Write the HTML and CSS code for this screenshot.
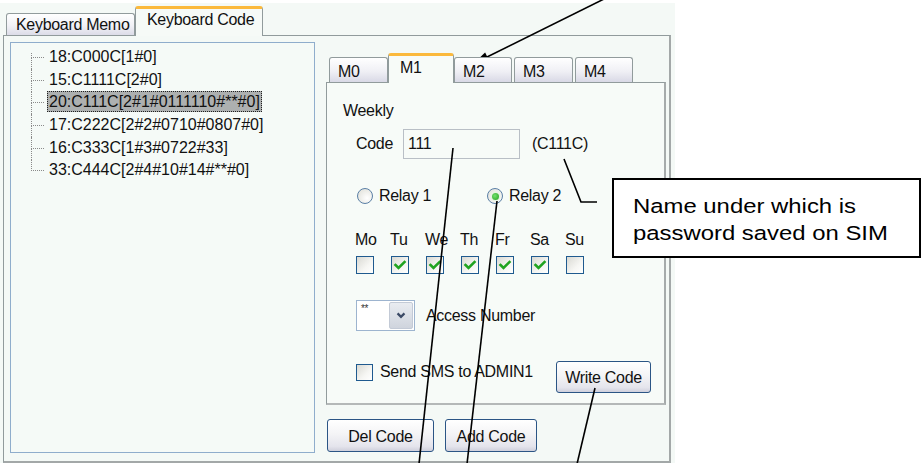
FILE: index.html
```html
<!DOCTYPE html>
<html>
<head>
<meta charset="utf-8">
<link rel="stylesheet" href="styles.css">
</head>
<body>
<div class="window">
  <div class="tabstrip">
    <div class="tab">Keyboard Memo</div>
    <div class="tab active">Keyboard Code</div>
  </div>
  <div class="panel">
    <div class="tree">
      <ul class="tree-list">
        <li><span class="node">18:C000C[1#0]</span></li>
        <li><span class="node">15:C1111C[2#0]</span></li>
        <li><span class="node selected">20:C111C[2#1#0111110#**#0]</span></li>
        <li><span class="node">17:C222C[2#2#0710#0807#0]</span></li>
        <li><span class="node">16:C333C[1#3#0722#33]</span></li>
        <li><span class="node">33:C444C[2#4#10#14#**#0]</span></li>
      </ul>
    </div>
    <div class="right">
      <div class="mtabs">
        <div class="mtab w59">M0</div>
        <div class="mtab active">M1</div>
        <div class="mtab w58">M2</div>
        <div class="mtab w59 gap">M3</div>
        <div class="mtab w58 gap">M4</div>
      </div>
      <div class="mpanel">
        <div class="weekly">Weekly</div>
        <div class="mbody">
          <div class="code-row">
            <span class="code-label">Code</span>
            <span class="code-input">111</span>
            <span class="code-name">(C111C)</span>
          </div>
          <div class="radio-row">
            <div class="radio-opt">
              <span class="radio"></span><span class="radio-label">Relay 1</span>
            </div>
            <div class="radio-opt">
              <span class="radio checked"><span class="dot"></span></span><span class="radio-label">Relay 2</span>
            </div>
          </div>
          <div class="days">
            <div class="day"><span class="day-label">Mo</span><span class="cb"></span></div>
            <div class="day"><span class="day-label">Tu</span><span class="cb"><svg viewBox="0 0 16 16" class="tick"><polyline points="3.5,8 6.5,11 12.5,5"/></svg></span></div>
            <div class="day"><span class="day-label">We</span><span class="cb"><svg viewBox="0 0 16 16" class="tick"><polyline points="3.5,8 6.5,11 12.5,5"/></svg></span></div>
            <div class="day"><span class="day-label">Th</span><span class="cb"><svg viewBox="0 0 16 16" class="tick"><polyline points="3.5,8 6.5,11 12.5,5"/></svg></span></div>
            <div class="day"><span class="day-label">Fr</span><span class="cb"><svg viewBox="0 0 16 16" class="tick"><polyline points="3.5,8 6.5,11 12.5,5"/></svg></span></div>
            <div class="day"><span class="day-label">Sa</span><span class="cb"><svg viewBox="0 0 16 16" class="tick"><polyline points="3.5,8 6.5,11 12.5,5"/></svg></span></div>
            <div class="day"><span class="day-label">Su</span><span class="cb"></span></div>
          </div>
          <div class="access">
            <div class="combo">
              <span class="combo-text">**</span>
              <span class="combo-btn"><svg viewBox="0 0 24 29" class="chev"><polyline points="8,12 12,16 16,12"/></svg></span>
            </div>
            <span class="access-label">Access Number</span>
          </div>
          <div class="bottom">
            <span class="cb sms"></span>
            <span class="sms-label">Send SMS to ADMIN1</span>
            <button class="btn write">Write Code</button>
          </div>
        </div>
      </div>
      <div class="btnrow">
        <button class="btn del">Del Code</button>
        <button class="btn add">Add Code</button>
      </div>
    </div>
  </div>
</div>

<div class="callout"><span class="callout-text">Name under which is<br>password saved on SIM</span></div>

<svg class="annot" width="921" height="463" viewBox="0 0 921 463">
  <line x1="604" y1="-1" x2="484" y2="58.5"/>
  <polygon points="473,64 489.5,61.3 485.1,52.4" class="head"/>
  <line x1="453" y1="148" x2="419" y2="464"/>
  <line x1="497" y1="201" x2="467" y2="464"/>
  <line x1="595" y1="388" x2="577" y2="464"/>
  <polyline points="564,159 581,202 597,202"/>
</svg>
</body>
</html>
```
FILE: styles.css
```css
* { box-sizing: border-box; }
html, body { margin: 0; padding: 0; }
body {
  width: 921px;
  height: 463px;
  background: #ffffff;
  position: relative;
  overflow: hidden;
  font-family: "Liberation Sans", Arial, sans-serif;
  font-size: 16px;
  letter-spacing: -0.3px;
  color: #111;
}

.window {
  margin-top: 3px;
  width: 675px;
  height: 460px;
  background: #f4f9f6;
  padding-left: 3px;
}

/* outer tabs */
.tabstrip {
  display: flex;
  align-items: flex-end;
  height: 32px;
  padding-left: 3px;
  position: relative;
  z-index: 2;
}
.tab {
  height: 22px;
  width: 129px;
  border: 1px solid #919b9c;
  border-bottom: none;
  border-radius: 3px 3px 0 0;
  background: linear-gradient(#ffffff, #f1f1f6 55%, #dcdce8);
  padding-left: 9px;
  line-height: 22px;
  white-space: nowrap;
}
.tab.active {
  height: 30px;
  width: 128px;
  margin-bottom: -1px;
  background: #f6faf7;
  border-top: 3px solid #fbb93c;
  padding-left: 11px;
  line-height: 22px;
}

.panel {
  width: 668px;
  height: 428px;
  border: 1px solid #919b9c;
  border-right: 2px solid #a3a8a8;
  border-bottom: 2px solid #a3a8a8;
  background: #f4f9f6;
  display: flex;
  padding: 6px 0 0 6px;
}

/* tree */
.tree {
  width: 305px;
  height: 411px;
  border: 1px solid #8fadcc;
  background: #f5faf7;
  padding: 3px 0 0 36px;
}
.tree-list {
  list-style: none;
  margin: 0;
  padding: 0;
}
.tree-list li {
  height: 22.7px;
  line-height: 22.7px;
  position: relative;
  white-space: nowrap;
}
.tree-list li::before {
  content: "";
  position: absolute;
  left: -16px;
  top: 0;
  width: 12px;
  height: 11px;
  border-left: 1px dotted #8a8a8a;
  border-bottom: 1px dotted #8a8a8a;
}
.tree-list li:first-child::before { top: 7px; height: 4px; }
.tree-list li::after {
  content: "";
  position: absolute;
  left: -16px;
  top: 11px;
  height: 12px;
  border-left: 1px dotted #8a8a8a;
}
.tree-list li:last-child::after { display: none; }
.node {
  display: inline-block;
  padding: 0 2px 0 2px;
  line-height: 21px;
  letter-spacing: 0;
}
.node.selected {
  background: #adb0b0;
  outline: 1px dotted #202020;
  outline-offset: -1px;
}

/* right column */
.right {
  margin-left: 11px;
  width: 340px;
  padding-top: 11px;
}
.mtabs {
  display: flex;
  align-items: flex-end;
  height: 29px;
  padding-left: 3px;
  position: relative;
  z-index: 1;
}
.mtab {
  height: 25px;
  border: 1px solid #919b9c;
  border-bottom: none;
  border-radius: 3px 3px 0 0;
  background: linear-gradient(#ffffff, #f0f0f5 55%, #d9d9e6);
  padding: 3px 0 0 8px;
  line-height: 21px;
}
.mtab.w59 { width: 59px; }
.mtab.w58 { width: 58px; }
.mtab.gap { margin-left: 2px; }
.mtab.active {
  width: 66px;
  height: 30px;
  margin-bottom: -1px;
  background: #f7fbf8;
  border-top: 3px solid #fbb93c;
  padding: 1px 0 0 11px;
}

.mpanel {
  width: 340px;
  height: 323px;
  border: 1px solid #919b9c;
  border-right: 2px solid #a6abab;
  border-bottom: 2px solid #b4b8b8;
  background: #f7fbf8;
}
.weekly {
  margin: 19px 0 0 16px;
  line-height: 18px;
}
.mbody { padding-left: 29px; }

.code-row {
  display: flex;
  align-items: center;
  height: 30px;
  margin-top: 9px;
}
.code-label { width: 47px; }
.code-input {
  width: 117px;
  height: 30px;
  border: 1px solid #b9bfc6;
  background: #f7fbf8;
  padding-left: 4px;
  line-height: 27px;
}
.code-name { margin-left: 12px; }

.radio-row {
  display: flex;
  align-items: center;
  height: 18px;
  margin-top: 28px;
}
.radio-opt {
  display: flex;
  align-items: center;
  width: 130px;
}
.radio {
  width: 16px;
  height: 16px;
  margin-left: 1px;
  border-radius: 50%;
  border: 1px solid #5a7fa6;
  background: radial-gradient(circle at 65% 65%, #ffffff, #e4e4de 80%);
  display: flex;
  align-items: center;
  justify-content: center;
}
.radio .dot {
  width: 7px;
  height: 7px;
  border-radius: 50%;
  background: radial-gradient(circle at 40% 40%, #74e06d, #22a11d);
  box-shadow: 0 0 0 1.5px #e7f3e2;
}
.radio-label { margin-left: 6px; }

.days {
  display: flex;
  margin-top: 26px;
}
.day {
  width: 35px;
  display: flex;
  flex-direction: column;
}
.day-label {
  line-height: 18px;
  margin-left: -1px;
}
.cb {
  width: 18px;
  height: 18px;
  margin-top: 7px;
  border: 1px solid #1f5a8f;
  background: linear-gradient(135deg, #d9d9d3, #f6f6f3 60%, #ffffff);
  display: flex;
  align-items: center;
  justify-content: center;
}
.tick {
  width: 16px;
  height: 16px;
  fill: none;
  stroke: #21a421;
  stroke-width: 2.6;
  stroke-linecap: square;
}

.access {
  display: flex;
  align-items: center;
  height: 31px;
  margin-top: 26px;
}
.combo {
  width: 59px;
  height: 31px;
  border: 1px solid #9db4cf;
  background: #ffffff;
  display: flex;
  justify-content: space-between;
  padding: 1px 1px 1px 4px;
}
.combo-text {
  font-size: 10px;
  line-height: 14px;
  color: #333;
}
.combo-btn {
  width: 24px;
  height: 27px;
  border-radius: 2px;
  background: linear-gradient(#e9ecf1, #cfd4dd);
  border: 1px solid #c3cad6;
}
.chev {
  width: 22px;
  height: 25px;
  fill: none;
  stroke: #3b4a66;
  stroke-width: 2.6;
}
.access-label { margin-left: 11px; }

.bottom {
  display: flex;
  align-items: flex-start;
  margin-top: 30px;
}
.cb.sms {
  width: 17px;
  height: 17px;
  margin-top: 3px;
}
.sms-label {
  margin-left: 7px;
  line-height: 20px;
  margin-top: 1px;
}
.btn {
  font-family: "Liberation Sans", Arial, sans-serif;
  font-size: 16px;
  letter-spacing: -0.3px;
  color: #111;
  border: 1px solid #2b5585;
  border-radius: 3px;
  background: linear-gradient(#ffffff, #f4f4f6 45%, #e4e4ec 85%, #cfd0dc);
  padding: 2px 0 0 0;
  margin: 0;
}
.btn.write {
  width: 95px;
  height: 32px;
  margin-left: auto;
  margin-right: 13px;
}

.btnrow {
  display: flex;
  gap: 11px;
  margin-top: 14px;
  padding-left: 1px;
}
.btn.del { width: 107px; height: 33px; }
.btn.add { width: 92px; height: 33px; }

/* annotation overlay */
.callout {
  position: absolute;
  left: 612px;
  top: 178px;
  width: 309px;
  height: 80px;
  border: 2px solid #000;
  background: #fff;
  padding: 12px 0 0 19px;
}
.callout-text {
  display: inline-block;
  font-family: "Liberation Sans", Arial, sans-serif;
  font-size: 20.5px;
  letter-spacing: 0;
  line-height: 27px;
  color: #000;
  transform: scaleX(1.165);
  transform-origin: left top;
  white-space: nowrap;
}
.annot {
  position: absolute;
  left: 0;
  top: 0;
  pointer-events: none;
}
.annot line, .annot polyline {
  stroke: #000;
  stroke-width: 1.6;
  fill: none;
}
.annot .head { fill: #000; stroke: none; }
```
